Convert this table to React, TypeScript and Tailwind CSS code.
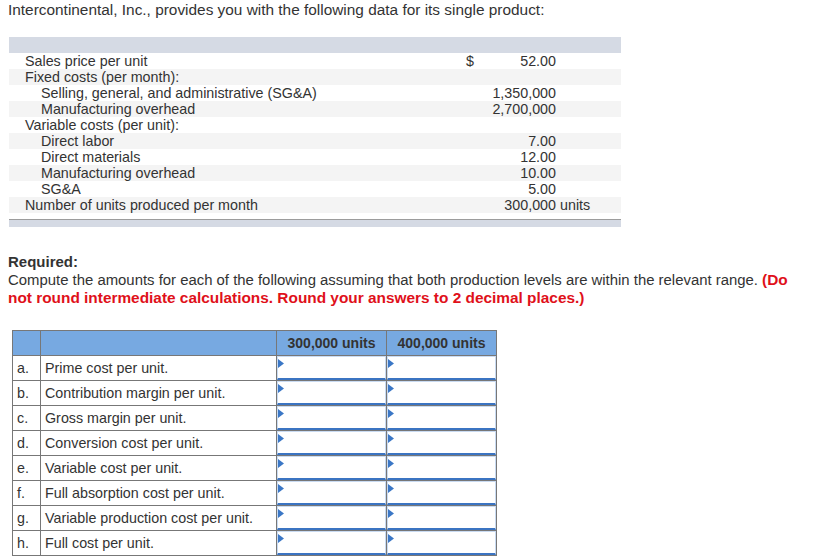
const dataRows = [
  { label: "Sales price per unit", level: 1, dollar: "$", value: "52.00", unit: "" },
  { label: "Fixed costs (per month):", level: 1, dollar: "", value: "", unit: "" },
  { label: "Selling, general, and administrative (SG&A)", level: 2, dollar: "", value: "1,350,000", unit: "" },
  { label: "Manufacturing overhead", level: 2, dollar: "", value: "2,700,000", unit: "" },
  { label: "Variable costs (per unit):", level: 1, dollar: "", value: "", unit: "" },
  { label: "Direct labor", level: 2, dollar: "", value: "7.00", unit: "" },
  { label: "Direct materials", level: 2, dollar: "", value: "12.00", unit: "" },
  { label: "Manufacturing overhead", level: 2, dollar: "", value: "10.00", unit: "" },
  { label: "SG&A", level: 2, dollar: "", value: "5.00", unit: "" },
  { label: "Number of units produced per month", level: 1, dollar: "", value: "300,000", unit: "units" },
]

const questions = [
  { key: "a.", text: "Prime cost per unit." },
  { key: "b.", text: "Contribution margin per unit." },
  { key: "c.", text: "Gross margin per unit." },
  { key: "d.", text: "Conversion cost per unit." },
  { key: "e.", text: "Variable cost per unit." },
  { key: "f.", text: "Full absorption cost per unit." },
  { key: "g.", text: "Variable production cost per unit." },
  { key: "h.", text: "Full cost per unit." },
]

function AnswerCell() {
  return (
    <td className="p-0 border border-[#777777] align-top">
      <div className="relative h-[24px] border border-[#c9dbf2] border-b-2 border-b-[#3b74c2] bg-white">
        {/* little marker in the corner of the input */}
        <svg className="absolute left-0 top-[2px]" width="6" height="9" viewBox="0 0 6 9">
          <polygon points="0,0 6,4.5 0,9" fill="#3b77c6" />
        </svg>
      </div>
    </td>
  )
}

export default function App() {
  return (
    <div className="w-[816px] h-[560px] bg-white text-[14.3px] text-[#333333] font-['Liberation_Sans',Arial,sans-serif] overflow-hidden">
      <div className="pt-[2px] pl-[8px] leading-[16px] text-[15.4px]">
        Intercontinental, Inc., provides you with the following data for its single product:
      </div>

      {/* data table */}
      <div className="ml-[9px] mt-[19px] w-[612px] leading-[16px]">
        <div className="h-[16px] bg-[#d5dae4]" />
        {dataRows.map((row, i) => (
          <div key={i} className={`flex h-[16px] ${i % 2 === 1 ? "bg-[#f4f4f4]" : "bg-white"}`}>
            <div className={`flex-1 whitespace-nowrap ${row.level === 1 ? "pl-[16px]" : "pl-[32px]"}`}>{row.label}</div>
            <div className="w-[20px] pl-[6px]">{row.dollar}</div>
            <div className="w-[76px] text-right">{row.value}</div>
            <div className="w-[65px] pl-[4px]">{row.unit}</div>
          </div>
        ))}
        <div className="mt-[6px] h-[8px] border-t border-[#9c9c9c] bg-[#d5dae4]" />
      </div>

      {/* required */}
      <div className="mt-[26px] pl-[8px] w-[808px] leading-[18px] text-[14.9px]">
        <div className="font-bold text-[15px]">Required:</div>
        <div className="whitespace-nowrap">
          Compute the amounts for each of the following assuming that both production levels are within the relevant range.{" "}
          <span className="font-bold text-[#e0101a] text-[15.4px]">(Do</span>
        </div>
        <div className="font-bold text-[#e0101a] text-[15.4px] whitespace-nowrap">
          not round intermediate calculations. Round your answers to 2 decimal places.)
        </div>
      </div>

      {/* answer table */}
      <table className="ml-[12px] mt-[23px] border-collapse table-fixed w-[485px] leading-[16px]">
        <colgroup>
          <col className="w-[28px]" />
          <col className="w-[236px]" />
          <col className="w-[110px]" />
          <col className="w-[110px]" />
        </colgroup>
        <thead>
          <tr className="h-[25px] bg-[#77a9e1]">
            <th className="border border-[#777777]" />
            <th className="border border-[#777777]" />
            <th className="border border-[#777777] font-bold text-center text-[14px] text-[#333333]">300,000 units</th>
            <th className="border border-[#777777] font-bold text-center text-[14px] text-[#333333]">400,000 units</th>
          </tr>
        </thead>
        <tbody>
          {questions.map((q) => (
            <tr key={q.key} className="h-[25px]">
              <td className="border border-[#777777] pl-[4px]">{q.key}</td>
              <td className="border border-[#777777] pl-[4px] whitespace-nowrap">{q.text}</td>
              <AnswerCell />
              <AnswerCell />
            </tr>
          ))}
        </tbody>
      </table>
    </div>
  )
}
